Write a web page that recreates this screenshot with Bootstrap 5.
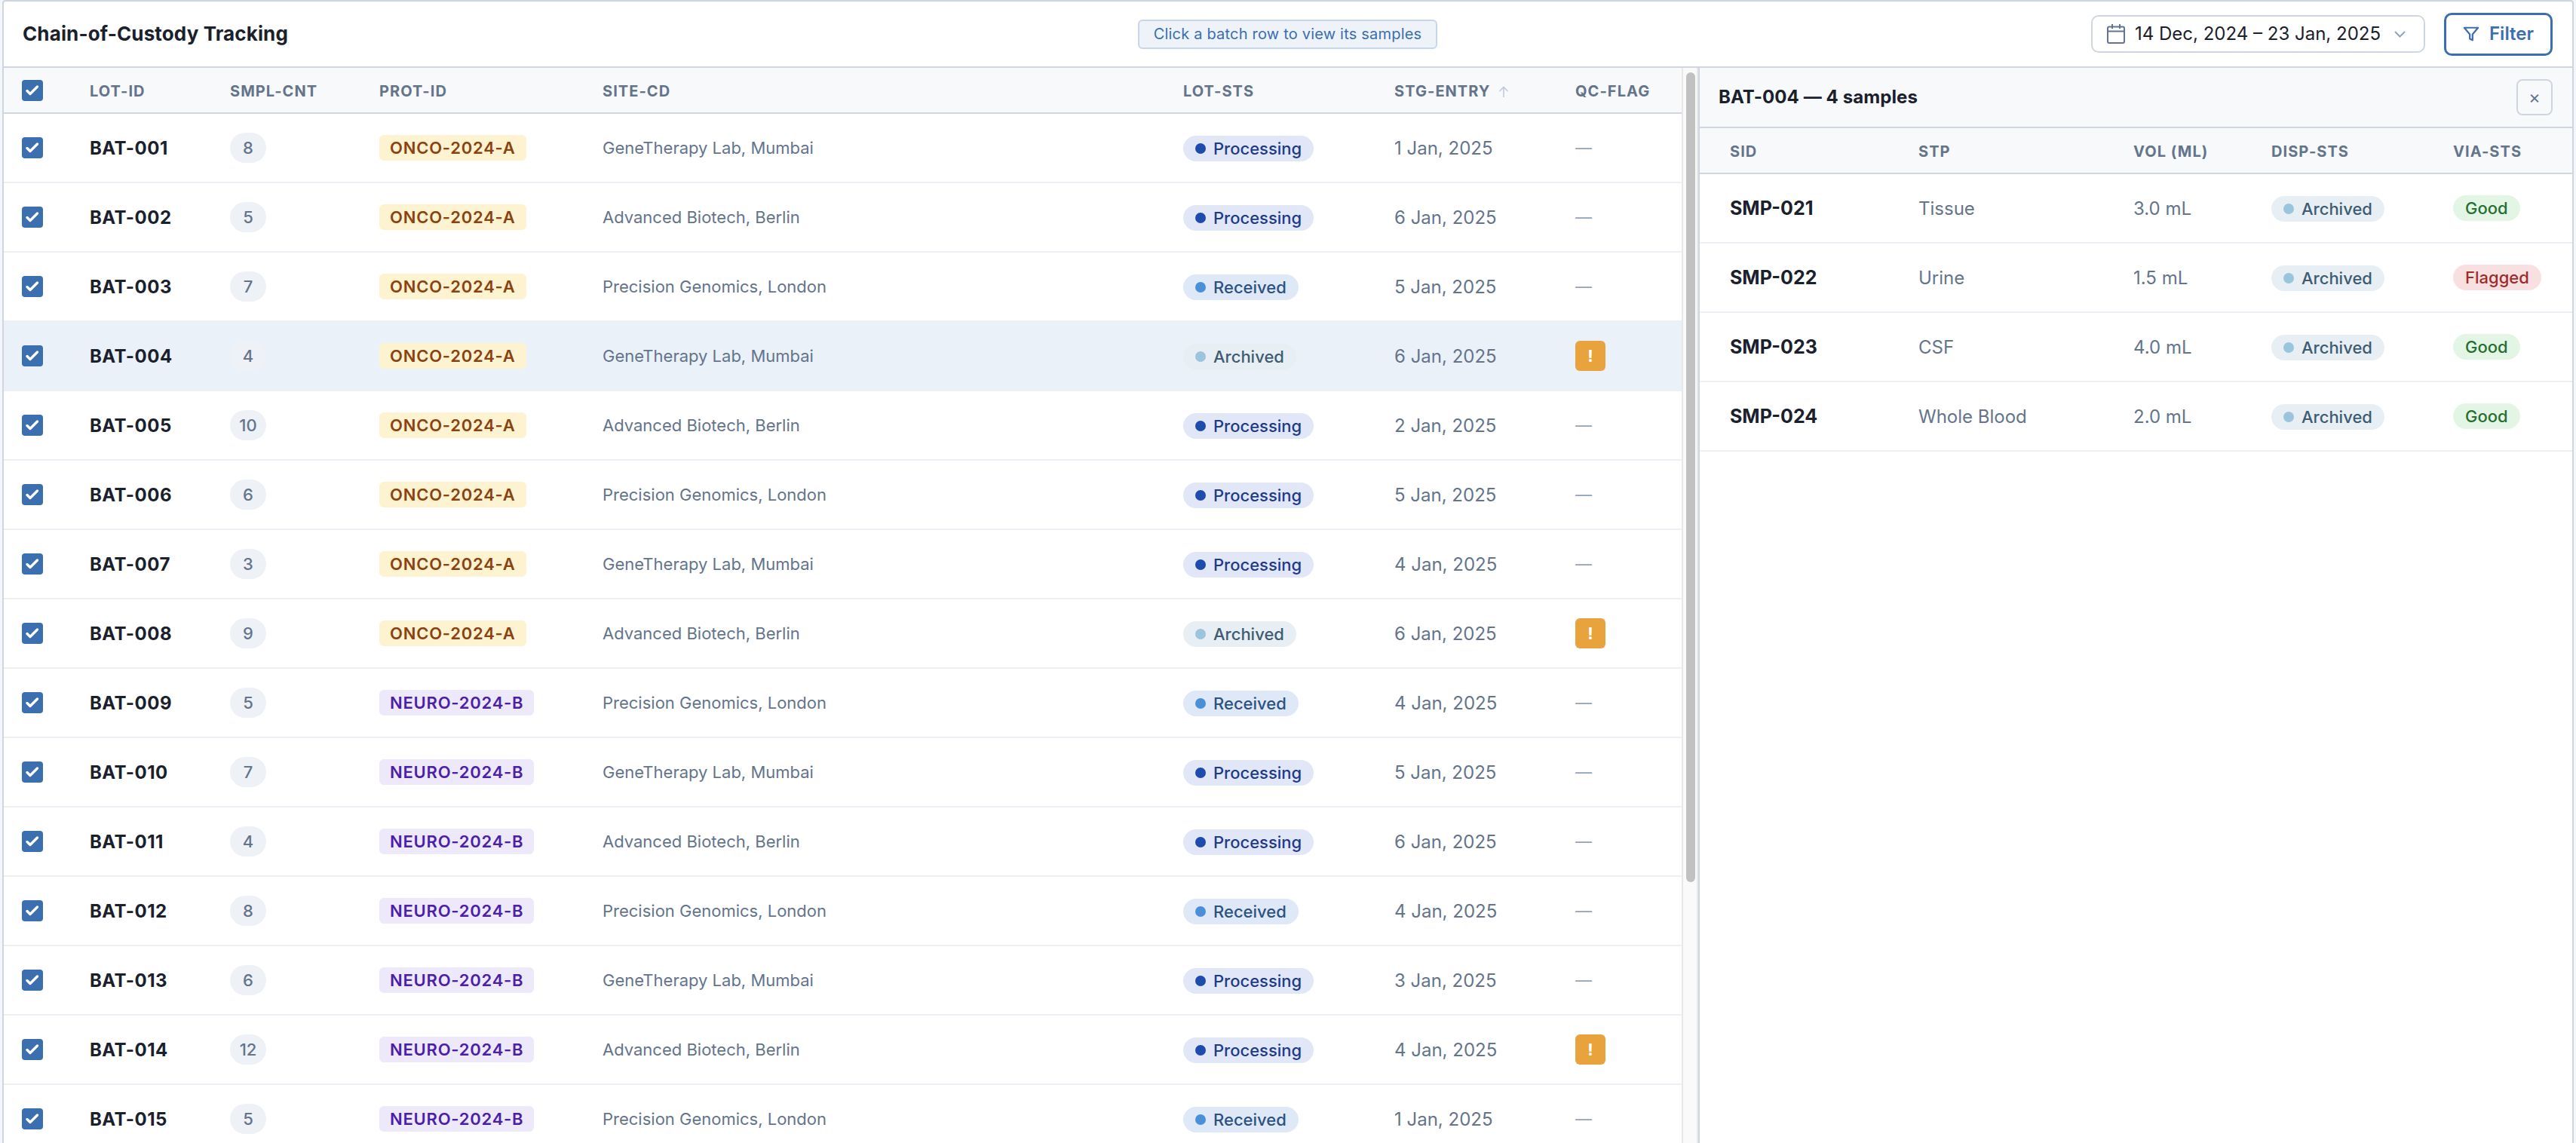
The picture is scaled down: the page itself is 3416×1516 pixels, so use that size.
<!DOCTYPE html>
<html lang="en">
<head>
  <meta charset="UTF-8">
  <title>Chain-of-Custody Tracking</title>
  <link href="https://cdn.jsdelivr.net/npm/bootstrap@5.3.0/dist/css/bootstrap.min.css" rel="stylesheet">
  <style>
    html, body { height: 100%; }
    body {
      background: #f3f6fb;
      font-family: Inter, "Noto Sans", sans-serif;
      color: #1a202c;
      overflow: hidden;
    }
    .shell {
      height: 100vh;
      margin: 0 3px 0 3px;
      background: #fff;
      border: 2px solid #cfd6e2;
      border-bottom: 0;
      border-radius: 4px 4px 0 0;
      display: flex;
      flex-direction: column;
    }
    .topbar {
      height: 88px;
      flex: none;
      border-bottom: 2px solid #cfd6e2;
      padding: 0 26px 0 25px;
    }
    .topbar-title { font-size: 26px; font-weight: 700; letter-spacing: 0.005em; flex: 1 0 0; margin: 0; }
    .hint {
      font-size: 20px;
      letter-spacing: 0.01em;
      line-height: 35px;
      padding: 0 19px;
      color: #3b6fb0;
      background: #eef2f9;
      border: 2px solid #c7d6ea;
      border-radius: 6px;
    }
    .topbar-right { flex: 1 0 0; justify-content: flex-end; gap: 25px; }
    .date-pick {
      height: 50px;
      padding: 0 24px 0 19px;
      font-size: 24px;
      color: #1a202c;
      background: #fff;
      border: 2px solid #cfd6e2;
      border-radius: 10px;
    }
    .date-text { margin: 0 18px 0 13px; }
    .filter-btn {
      height: 57px;
      width: 144px;
      font-size: 24px;
      font-weight: 600;
      color: #3b6fb0;
      background: #fff;
      border: 3px solid #3b6fb0;
      border-radius: 10px;
      gap: 13px;
    }
    .split { flex: 1 1 0; min-height: 0; }
    .batch-wrap {
      width: 2225px;
      flex: none;
      overflow: hidden;
      height: 100%;
    }
    .scroll-track {
      width: 22px;
      flex: none;
      background: #fafafa;
      border-left: 2px solid #e8e8e8;
      border-right: 2px solid #e8e8e8;
    }
    .scroll-thumb {
      width: 12px;
      height: 1074px;
      margin: 6px 0 0 4px;
      background: #c1c1c1;
      border-radius: 6px;
    }
    .side-panel {
      flex: 1 1 0;
      border-left: 2px solid #cfd6e2;
      min-width: 0;
    }
    .panel-head {
      height: 80px;
      flex: none;
      background: #f7f9fb;
      border-bottom: 2px solid #cfd6e2;
      padding: 0 26px 0 25px;
    }
    .panel-title { font-size: 24px; font-weight: 700; letter-spacing: 0.004em; margin: 0; }
    .close-btn {
      width: 48px;
      height: 48px;
      padding: 0;
      font-size: 24px;
      line-height: 1;
      color: #64748b;
      background: #f7f9fb;
      border: 2px solid #cfd6e2;
      border-radius: 8px;
    }
    .data-tbl {
      table-layout: fixed;
      width: 100%;
      margin: 0;
      border-collapse: separate;
      border-spacing: 0;
    }
    .data-tbl th {
      height: 61px;
      padding: 2px 0 0 24px;
      font-size: 20px;
      font-weight: 700;
      letter-spacing: 1.05px;
      color: #64748b;
      background: #f7f9fb;
      border-bottom: 2px solid #cfd6e2;
      white-space: nowrap;
      vertical-align: middle;
    }
    .data-tbl th.chk-cell { padding-top: 0; }
    .data-tbl td {
      height: 92px;
      padding: 2px 0 0 24px;
      font-size: 24px;
      color: #64748b;
      background: #fff;
      border-bottom: 2px solid #edeff4;
      white-space: nowrap;
      vertical-align: middle;
    }
    .data-tbl td.box-cell { padding-top: 0; }
    .data-tbl tr.is-open td { background: #eaf1f9; }
    .data-tbl td.cell-id { font-weight: 700; color: #1a202c; letter-spacing: 0.02em; }
    .sample-tbl td.cell-id { font-size: 25px; letter-spacing: 0; }
    .data-tbl td.cell-site { font-size: 22px; padding-top: 0; }
    .sample-tbl th:first-child, .sample-tbl td:first-child { padding-left: 40px; }
    .chk {
      display: block;
      width: 28px;
      height: 28px;
      background: #3b6fb0;
      border-radius: 4px;
    }
    .chk svg { display: block; }
    .cnt-pill {
      display: inline-block;
      min-width: 48px;
      padding: 0 8px;
      line-height: 40px;
      text-align: center;
      font-size: 22px;
      font-weight: 500;
      color: #64748b;
      background: #eef1f6;
      border-radius: 20px;
    }
    .prot-tag {
      display: inline-block;
      padding: 0 14px;
      line-height: 34px;
      font-size: 22px;
      font-weight: 600;
      letter-spacing: 0.035em;
      border-radius: 6px;
    }
    .prot-onco { background: #fdf3d0; color: #8a4210; }
    .prot-neuro { background: #ede9fb; color: #4c1fa8; }
    .sts-pill {
      display: inline-flex;
      align-items: center;
      gap: 10px;
      padding: 0 16px;
      line-height: 34px;
      font-size: 22px;
      font-weight: 500;
      border-radius: 17px;
    }
    .sts-pill i { width: 14px; height: 14px; border-radius: 50%; display: block; }
    .sts-processing { background: #e1e7f6; color: #1e3a8a; }
    .sts-processing i { background: #1e4bae; }
    .sts-received { background: #dfe8f7; color: #2c5282; }
    .sts-received i { background: #4a90d9; }
    .sts-archived { background: #e8eff4; color: #3d5c73; }
    .sts-archived i { background: #9ac5dd; }
    .sts-good { background: #e3f6e6; color: #276e30; }
    .sts-flagged { background: #f9e0e0; color: #9b2c2c; }
    .qc-none { color: #94a3b8; font-size: 22px; }
    .qc-flag {
      display: block;
      width: 40px;
      height: 40px;
      line-height: 40px;
      text-align: center;
      font-size: 22px;
      font-weight: 700;
      color: #fff;
      background: #e8a33d;
      border-radius: 6px;
    }
    .sort-mark { margin-left: 10px; vertical-align: -1px; }
  </style>
</head>
<body>
  <div class="shell">
    <div class="topbar d-flex align-items-center">
      <h1 class="topbar-title">Chain-of-Custody Tracking</h1>
      <span class="hint">Click a batch row to view its samples</span>
      <div class="topbar-right d-flex align-items-center">
        <button class="date-pick d-inline-flex align-items-center" type="button">
          <svg width="24" height="26" viewBox="0 0 24 26" fill="none" stroke="#64748b" stroke-width="2">
            <rect x="1" y="3.5" width="22" height="21.5" rx="2"/>
            <path d="M1 9.500h22M7 0v6M17 0v6"/>
          </svg>
          <span class="date-text">14 Dec, 2024 – 23 Jan, 2025</span>
          <svg width="15" height="9" viewBox="0 0 15 9" fill="none" stroke="#94a3b8" stroke-width="2">
            <path d="M1 1l6.500 6.500L14 1"/>
          </svg>
        </button>
        <button class="filter-btn d-inline-flex align-items-center justify-content-center" type="button">
          <svg width="22" height="22" viewBox="0 0 24 24" fill="none" stroke="#3b6fb0" stroke-width="2.4" stroke-linejoin="round">
            <path d="M22 3H2l8 9.500V19l4 2v-8.500z"/>
          </svg>
          Filter
        </button>
      </div>
    </div>

    <div class="split d-flex">
      <div class="batch-wrap">
        <table class="data-tbl batch-tbl">
          <colgroup>
            <col style="width:90px"><col style="width:186px"><col style="width:198px"><col style="width:296px">
            <col style="width:770px"><col style="width:280px"><col style="width:240px"><col style="width:165px">
          </colgroup>
          <thead>
            <tr>
              <th class="chk-cell"><span class="chk"><svg width="28" height="28" viewBox="0 0 28 28"><path d="M7 14.500l4 4 9.500-9.500" fill="none" stroke="#fff" stroke-width="3.4" stroke-linecap="round" stroke-linejoin="round"/></svg></span></th>
              <th>LOT-ID</th>
              <th>SMPL-CNT</th>
              <th>PROT-ID</th>
              <th>SITE-CD</th>
              <th>LOT-STS</th>
              <th>STG-ENTRY<svg class="sort-mark" width="14" height="15" viewBox="0 0 14 15" fill="none" stroke="#c3cad8" stroke-width="1.6"><path d="M7 15V1.500M1.500 7L7 1.500 12.500 7"/></svg></th>
              <th>QC-FLAG</th>
            </tr>
          </thead>
          <tbody id="batch-rows"></tbody>
        </table>
      </div>
      <div class="scroll-track"><div class="scroll-thumb"></div></div>

      <div class="side-panel d-flex flex-column">
        <div class="panel-head d-flex align-items-center justify-content-between">
          <h2 class="panel-title">BAT-004 — 4 samples</h2>
          <button class="close-btn" type="button">×</button>
        </div>
        <table class="data-tbl sample-tbl">
          <colgroup>
            <col style="width:266px"><col style="width:285px"><col style="width:183px"><col style="width:241px"><col style="width:182px">
          </colgroup>
          <thead>
            <tr><th>SID</th><th>STP</th><th>VOL (ML)</th><th>DISP-STS</th><th>VIA-STS</th></tr>
          </thead>
          <tbody id="sample-rows"></tbody>
        </table>
      </div>
    </div>
  </div>

  <script>
    const sites = ["GeneTherapy Lab, Mumbai", "Advanced Biotech, Berlin", "Precision Genomics, London"];
    // lot, count, status, entry day, flagged
    const batches = [
      [1, 8, "Processing", 1, 0], [2, 5, "Processing", 6, 0], [3, 7, "Received", 5, 0],
      [4, 4, "Archived", 6, 1], [5, 10, "Processing", 2, 0], [6, 6, "Processing", 5, 0],
      [7, 3, "Processing", 4, 0], [8, 9, "Archived", 6, 1], [9, 5, "Received", 4, 0],
      [10, 7, "Processing", 5, 0], [11, 4, "Processing", 6, 0], [12, 8, "Received", 4, 0],
      [13, 6, "Processing", 3, 0], [14, 12, "Processing", 4, 1], [15, 5, "Received", 1, 0]
    ];
    const check = '<span class="chk"><svg width="28" height="28" viewBox="0 0 28 28"><path d="M7 14.500l4 4 9.500-9.500" fill="none" stroke="#fff" stroke-width="3.4" stroke-linecap="round" stroke-linejoin="round"/></svg></span>';

    function pad(n) { return String(n).padStart(3, "0"); }
    function pill(label) { return `<span class="sts-pill sts-${label.toLowerCase()}"><i></i>${label}</span>`; }

    document.getElementById("batch-rows").innerHTML = batches.map(([lot, cnt, sts, day, flag], i) => {
      const prot = i < 8 ? '<span class="prot-tag prot-onco">ONCO-2024-A</span>' : '<span class="prot-tag prot-neuro">NEURO-2024-B</span>';
      return `<tr class="${lot === 4 ? "is-open" : ""}">
        <td class="box-cell">${check}</td>
        <td class="cell-id">BAT-${pad(lot)}</td>
        <td class="box-cell"><span class="cnt-pill">${cnt}</span></td>
        <td class="box-cell">${prot}</td>
        <td class="cell-site">${sites[i % 3]}</td>
        <td class="box-cell">${pill(sts)}</td>
        <td>${day} Jan, 2025</td>
        <td class="box-cell">${flag ? '<span class="qc-flag">!</span>' : '<span class="qc-none">—</span>'}</td>
      </tr>`;
    }).join("");

    const samples = [
      ["SMP-021", "Tissue", "3.0 mL", "Good"],
      ["SMP-022", "Urine", "1.5 mL", "Flagged"],
      ["SMP-023", "CSF", "4.0 mL", "Good"],
      ["SMP-024", "Whole Blood", "2.0 mL", "Good"]
    ];
    document.getElementById("sample-rows").innerHTML = samples.map(([sid, stp, vol, via]) => `<tr>
        <td class="cell-id">${sid}</td>
        <td>${stp}</td>
        <td>${vol}</td>
        <td class="box-cell">${pill("Archived")}</td>
        <td class="box-cell"><span class="sts-pill sts-${via.toLowerCase()}">${via}</span></td>
      </tr>`).join("");
  </script>
  <script src="https://cdn.jsdelivr.net/npm/bootstrap@5.3.0/dist/js/bootstrap.bundle.min.js"></script>
</body>
</html>
